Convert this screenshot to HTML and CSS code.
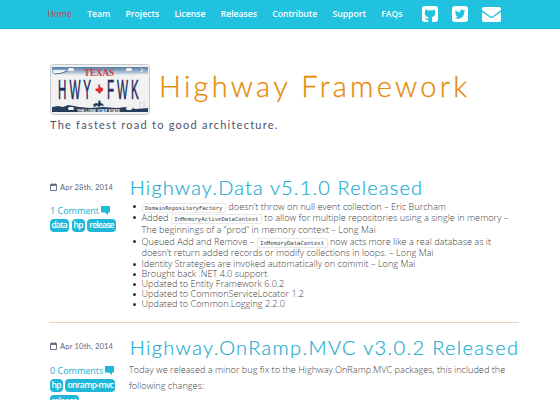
FILE: index.html
```html
<!DOCTYPE html>
<html lang="en">
<head>
<meta charset="utf-8">
<title>Highway Framework</title>
<link rel="stylesheet" href="styles.css">
</head>
<body>
<nav class="nav">
  <a class="active">Home</a><a>Team</a><a>Projects</a><a>License</a><a>Releases</a><a>Contribute</a><a>Support</a><a>FAQs</a>
  <div class="social">
    <svg width="16" height="16" viewBox="0 0 16 16"><rect width="16" height="16" rx="3" fill="#fff"/><path d="M3.3 3.2 5.600 4.500Q8 4 10.400 4.500L12.700 3.200 12.900 5.600Q14 8 12.300 9.800 11.400 10.800 9.600 11.200 10.100 11.700 10.100 12.600V16H6.200V14Q4 14.400 3.500 12.500L2.700 11.700Q4 11.400 4.700 12.600 5.400 13.300 6.200 12.800L6.600 11.200Q4.500 10.900 3.600 9.800 2 8 3.100 5.600Z" fill="#20c2e0"/></svg>
    <svg width="16" height="16" viewBox="0 0 16 16"><rect width="16" height="16" rx="3" fill="#fff"/><path d="M13.3 4.800 12.200 5.900Q12.100 10 9 11.900 5.800 13.500 2.700 11.700 4.600 11.800 5.800 10.800 4.300 10.600 3.800 9.300H4.800Q3.100 8.500 3.100 6.900L4.100 7.200Q2.700 5.900 3.600 4.200 5.400 6.300 8 6.400 7.600 4 9.700 3.600 10.800 3.500 11.500 4.200L12.900 3.700 12.100 4.900Z" fill="#20c2e0"/></svg>
    <svg width="19" height="15" viewBox="0 0 19 15"><path d="M2 0H17Q19 0 19 2 18.8 3.300 17.500 4.300L11 9Q9.500 10 8 9L1.500 4.300Q0 3.300 0 2 0 0 2 0ZM0 5 7.500 10.300Q9.500 11.500 11.500 10.300L19 5V13Q19 15 17 15H2Q0 15 0 13Z" fill="#fff"/></svg>
  </div>
</nav>
<main class="page">
  <header class="masthead">
    <div class="brand">
      <svg class="plate" width="100" height="51" viewBox="0 0 100 51">
        <defs><linearGradient id="sky" x2="0" y2="1"><stop offset="0" stop-color="#527ba4"/><stop offset=".65" stop-color="#afc2d4"/><stop offset="1" stop-color="#eff1f2"/></linearGradient></defs>
        <rect x=".5" y=".5" width="99" height="50" rx="3" fill="#f1f2f1" stroke="#c8cbcd"/>
        <path d="M2 3H98V10Q50 13 2 10Z" fill="url(#sky)"/>
        <path d="M3 6H17Q12 10 4 10Z" fill="#eef1f1"/>
        <path d="M4 10Q12 10 17 7" stroke="#38566f" fill="none" stroke-width=".8"/>
        <path d="M2 43 8 42 13 43 18 41 29 43 40 44 53 43 67 44 76 43 86 45 98 44V48H2Z" fill="#263d5b"/>
        <path d="M43 40.500 46 39 48 39.500 48.500 36.500 50 36.500 51 39 53 40 54 42 51 41.500 49 43 47 41.500 44 43ZM90 44V37M94 44V36" fill="#263d5b" stroke="#8b98a8" stroke-width=".3"/>
        <g fill="#f5f4eb"><rect x="18" y="4" width="6" height="3" rx="1.500"/><rect x="76" y="4" width="6" height="3" rx="1.500"/><rect x="18" y="43" width="6" height="3" rx="1.500"/><rect x="76" y="43" width="6" height="3" rx="1.500"/></g>
        <circle cx="91" cy="6" r="2" fill="#e8edf2"/><circle cx="90" cy="5.500" r="1.800" fill="#7898b8"/>
        <text x="34" y="12" textLength="30" lengthAdjust="spacingAndGlyphs" class="texas">TEXAS</text>
        <text transform="translate(8 34.500) scale(.43 1)" class="plate-number">HWY</text>
        <text transform="translate(57 34.500) scale(.43 1)" class="plate-number">FWK</text>
        <path d="M48.300 20.500H50V23L53 24V26.500L50.500 28.500 49.500 30 47.500 27.500 45.500 26.500V24.500H48.300Z" fill="#df2931"/>
        <text x="27" y="48" textLength="43" lengthAdjust="spacingAndGlyphs" class="motto">THE LONE STAR STATE</text>
      </svg>
      <h1>Highway Framework</h1>
    </div>
    <p class="tagline">The fastest road to good architecture.</p>
  </header>
  <article class="post first">
    <aside>
      <div class="date"><svg width="7" height="8" viewBox="0 0 7 8"><path d="M.5 1.500H6.500V7.500H.5ZM.5 2.500H6.500M2 0V2M5 0V2" fill="none" stroke="#46516b" stroke-width=".8"/></svg><span>Apr 28th, 2014</span></div>
      <div class="comments"><span>1 Comment</span><svg width="9" height="9" viewBox="0 0 9 9"><path d="M0 0H9V6.500H7V9L4 6.500H0Z" fill="#20b8d8"/></svg></div>
      <div class="tags"><span>data</span><span>hp</span><span>release</span></div>
    </aside>
    <div class="content">
      <h2 class="t1">Highway.Data v5.1.0 Released</h2>
      <ul>
        <li><code>DomainRepositoryFactory</code> doesn’t throw on null event collection – Eric Burcham</li>
        <li class="tall">Added <code>InMemoryActiveDataContext</code> to allow for multiple repositories using a single in memory –<br>The beginnings of a “prod” in memory context – Long Mai</li>
        <li class="tall">Queued Add and Remove – <code>InMemoryDataContext</code> now acts more like a real database as it<br>doesn’t return added records or modify collections in loops. – Long Mai</li>
        <li>Identity Strategies are invoked automatically on commit – Long Mai</li>
        <li>Brought back .NET 4.0 support</li>
        <li>Updated to Entity Framework 6.0.2</li>
        <li>Updated to CommonServiceLocator 1.2</li>
        <li>Updated to Common.Logging 2.2.0</li>
      </ul>
    </div>
  </article>
  <article class="post second">
    <aside>
      <div class="date"><svg width="7" height="8" viewBox="0 0 7 8"><path d="M.5 1.500H6.500V7.500H.5ZM.5 2.500H6.500M2 0V2M5 0V2" fill="none" stroke="#46516b" stroke-width=".8"/></svg><span>Apr 10th, 2014</span></div>
      <div class="comments"><span>0 Comments</span><svg width="9" height="9" viewBox="0 0 9 9"><path d="M0 0H9V6.500H7V9L4 6.500H0Z" fill="#20b8d8"/></svg></div>
      <div class="tags"><span>hp</span><span>onramp-mvc</span><span>release</span></div>
    </aside>
    <div class="content">
      <h2 class="t2">Highway.OnRamp.MVC v3.0.2 Released</h2>
      <p>Today we released a minor bug fix to the Highway.OnRamp.MVC packages, this included the<br>following changes:</p>
    </div>
  </article>
</main>
</body>
</html>
```
FILE: styles.css
```css
* { box-sizing: border-box; }
html { overflow: hidden; }
body { margin: 0; height: 400px; overflow: hidden; background: #fff; font: 300 9.17px "Open Sans", sans-serif; color: #404040; }
.nav { height: 29px; display: flex; align-items: center; gap: 15.3px; padding-left: 47.5px; background: #20c2e0; border-bottom: 1px solid #16b5d5; color: #fff; font-size: 8.65px; font-weight: 600; white-space: nowrap; }
.nav a { margin-top: -1px; }
.nav .active { color: #cc4444; font-weight: 400; }
.social { display: flex; align-items: center; gap: 14px; margin-left: 4.5px; }
.page { width: 470px; height: 371px; overflow: hidden; margin-left: 49px; }
.masthead { height: 148px; padding-top: 35px; }
.brand { display: flex; height: 51px; }
.plate { flex: none; margin-left: 1px; }
.texas { font: bold 11px "Liberation Serif", serif; fill: #cc3941; }
.plate-number { font: 27px "Liberation Sans", sans-serif; letter-spacing: 7px; fill: #202b60; stroke: #202b60; stroke-width: .5px; }
.motto { font: bold 4px "Liberation Sans", sans-serif; fill: #fff; }
h1, h2, .tagline, .date { font-family: Lato, sans-serif; font-weight: 300; white-space: nowrap; }
h1 { margin: 4px 0 0 9px; font-size: 29px; line-height: 36px; letter-spacing: 3.25px; color: #e58a0b; -webkit-text-stroke: .3px #e58a0b; }
.tagline { margin: 3px 0 0 1px; font-size: 11px; line-height: 14px; letter-spacing: 1.24px; color: #4c536c; font-weight: 400; }
.post { display: grid; grid-template-columns: 80px 390px; }
.first { height: 146px; border-bottom: 1px solid #f1cfb5; }
h2 { margin: -1px 0 0 .7px; font-size: 20px; line-height: 22px; color: #20acd0; -webkit-text-stroke: .2px #20acd0; }
.t1 { letter-spacing: 1.15px; }
.t2 { letter-spacing: 1.34px; }
.date { display: flex; align-items: center; gap: 3px; height: 10px; margin-top: 5px; padding-left: 1px; color: #5a647a; font-size: 7.5px; letter-spacing: .2px; font-weight: 400; }
.comments { display: flex; align-items: center; gap: 2px; height: 12px; margin-top: 12px; padding-left: 1px; color: #20acd0; font-size: 9px; font-weight: 400; }
.tags { display: flex; flex-wrap: wrap; gap: 3px 2.5px; width: 72px; margin-top: 3px; padding-left: .5px; }
.tags span { height: 13px; padding: 0 2px; border-radius: 4px; background: #20b8d8; color: #fff; font-size: 8.5px; line-height: 12px; font-weight: 600; letter-spacing: -.62px; }
.first .tags span { letter-spacing: -.75px; }
ul { list-style: none; margin: 3px 0 0; padding-left: 12.5px; }
li { position: relative; height: 10px; line-height: 10px; white-space: nowrap; }
li:first-child { height: 11px; line-height: 11px; }
li::before { content: ""; position: absolute; left: -9px; top: 4px; width: 3px; height: 3px; border-radius: 50%; background: #333; }
.tall { height: 23.5px; line-height: 11.750px; }
code { padding: 1px 2.500px; border: 1px solid #e8e8e8; border-radius: 2px; font: 5.600px/8px "DejaVu Sans Mono", monospace; }
.second { padding-top: 13px; }
.second h2 { margin-top: 0; }
.second .comments { margin-top: 13px; }
.content p { margin: 4px 0 0; line-height: 16px; white-space: nowrap; }
```
